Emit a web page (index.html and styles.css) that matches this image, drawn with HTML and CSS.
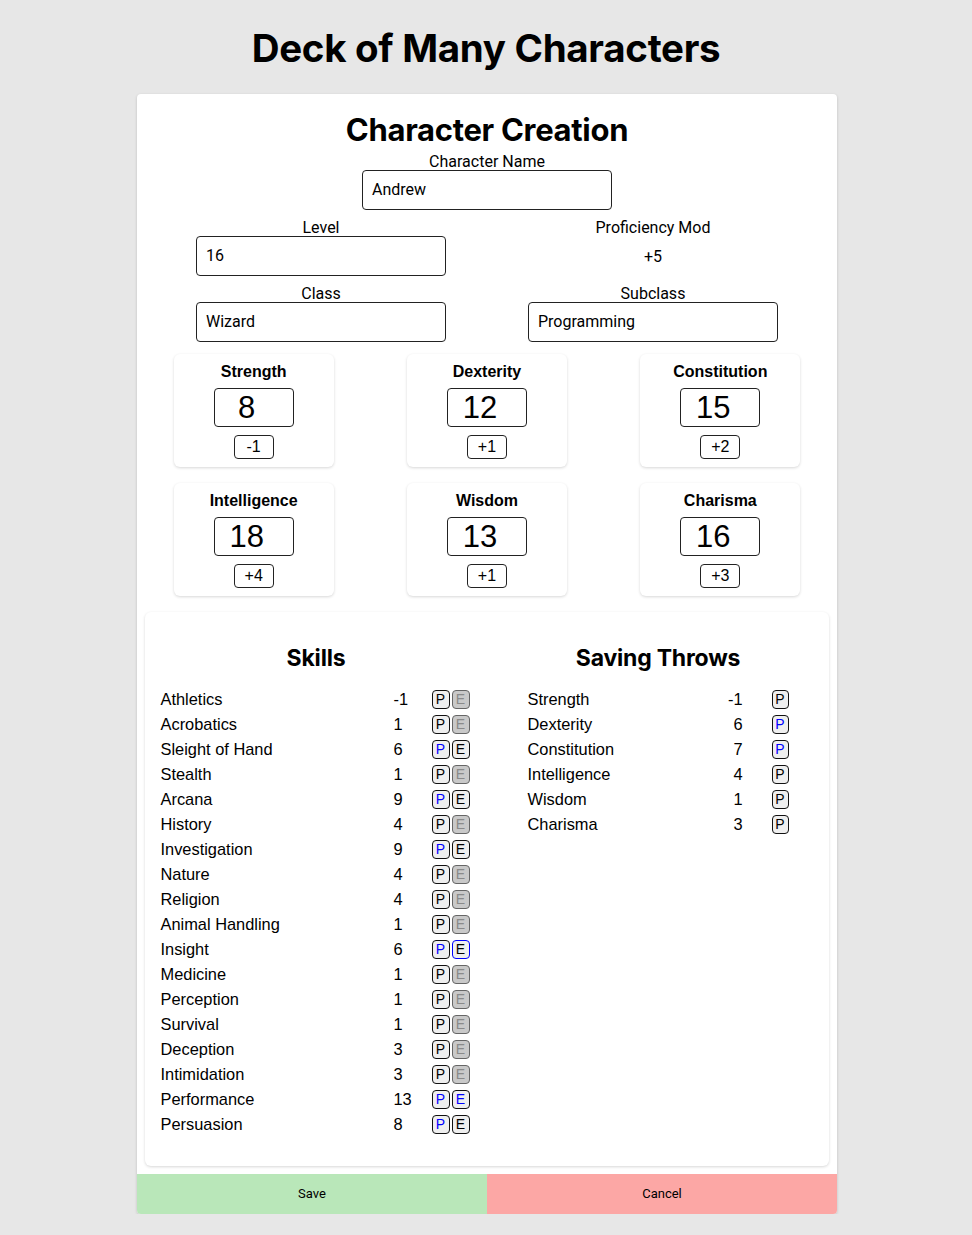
FILE: index.html
```html
<!DOCTYPE html>
<html>
<head>
<meta charset="utf-8">
<link rel="stylesheet" href="styles.css">
</head>
<body>
<h1 class="page-title">Deck of Many Characters</h1>
<div class="card">
  <div class="card-body">
    <h2 class="card-title">Character Creation</h2>
    <div class="field center">
      <label class="lbl">Character Name</label>
      <div class="input">Andrew</div>
    </div>
    <div class="two-col">
      <div class="field">
        <label class="lbl">Level</label>
        <div class="input">16</div>
      </div>
      <div class="field">
        <label class="lbl">Proficiency Mod</label>
        <div class="static">+5</div>
      </div>
      <div class="field">
        <label class="lbl">Class</label>
        <div class="input">Wizard</div>
      </div>
      <div class="field">
        <label class="lbl">Subclass</label>
        <div class="input">Programming</div>
      </div>
    </div>
  </div>

  <div class="abilities">
    <div class="ability"><div class="ab-name">Strength</div><div class="ab-val">8</div><div class="ab-mod">-1</div></div>
    <div class="ability"><div class="ab-name">Dexterity</div><div class="ab-val">12</div><div class="ab-mod">+1</div></div>
    <div class="ability"><div class="ab-name">Constitution</div><div class="ab-val">15</div><div class="ab-mod">+2</div></div>
    <div class="ability"><div class="ab-name">Intelligence</div><div class="ab-val">18</div><div class="ab-mod">+4</div></div>
    <div class="ability"><div class="ab-name">Wisdom</div><div class="ab-val">13</div><div class="ab-mod">+1</div></div>
    <div class="ability"><div class="ab-name">Charisma</div><div class="ab-val">16</div><div class="ab-mod">+3</div></div>
  </div>

  <div class="skills-card">
    <div class="skills-col">
      <h3 class="sec-title">Skills</h3>
      <div class="skill-table">
        <div class="row"><span class="nm">Athletics</span><span class="vl">-1</span><span class="bd"><span class="b">P</span><span class="b dis">E</span></span></div>
        <div class="row"><span class="nm">Acrobatics</span><span class="vl">1</span><span class="bd"><span class="b">P</span><span class="b dis">E</span></span></div>
        <div class="row"><span class="nm">Sleight of Hand</span><span class="vl">6</span><span class="bd"><span class="b on">P</span><span class="b">E</span></span></div>
        <div class="row"><span class="nm">Stealth</span><span class="vl">1</span><span class="bd"><span class="b">P</span><span class="b dis">E</span></span></div>
        <div class="row"><span class="nm">Arcana</span><span class="vl">9</span><span class="bd"><span class="b on">P</span><span class="b">E</span></span></div>
        <div class="row"><span class="nm">History</span><span class="vl">4</span><span class="bd"><span class="b">P</span><span class="b dis">E</span></span></div>
        <div class="row"><span class="nm">Investigation</span><span class="vl">9</span><span class="bd"><span class="b on">P</span><span class="b">E</span></span></div>
        <div class="row"><span class="nm">Nature</span><span class="vl">4</span><span class="bd"><span class="b">P</span><span class="b dis">E</span></span></div>
        <div class="row"><span class="nm">Religion</span><span class="vl">4</span><span class="bd"><span class="b">P</span><span class="b dis">E</span></span></div>
        <div class="row"><span class="nm">Animal Handling</span><span class="vl">1</span><span class="bd"><span class="b">P</span><span class="b dis">E</span></span></div>
        <div class="row"><span class="nm">Insight</span><span class="vl">6</span><span class="bd"><span class="b on">P</span><span class="b focus">E</span></span></div>
        <div class="row"><span class="nm">Medicine</span><span class="vl">1</span><span class="bd"><span class="b">P</span><span class="b dis">E</span></span></div>
        <div class="row"><span class="nm">Perception</span><span class="vl">1</span><span class="bd"><span class="b">P</span><span class="b dis">E</span></span></div>
        <div class="row"><span class="nm">Survival</span><span class="vl">1</span><span class="bd"><span class="b">P</span><span class="b dis">E</span></span></div>
        <div class="row"><span class="nm">Deception</span><span class="vl">3</span><span class="bd"><span class="b">P</span><span class="b dis">E</span></span></div>
        <div class="row"><span class="nm">Intimidation</span><span class="vl">3</span><span class="bd"><span class="b">P</span><span class="b dis">E</span></span></div>
        <div class="row"><span class="nm">Performance</span><span class="vl">13</span><span class="bd"><span class="b on">P</span><span class="b on">E</span></span></div>
        <div class="row"><span class="nm">Persuasion</span><span class="vl">8</span><span class="bd"><span class="b on">P</span><span class="b">E</span></span></div>
      </div>
    </div>
    <div class="skills-col">
      <h3 class="sec-title">Saving Throws</h3>
      <div class="save-table">
        <div class="row"><span class="nm">Strength</span><span class="vl">-1</span><span class="bd"><span class="b">P</span></span></div>
        <div class="row"><span class="nm">Dexterity</span><span class="vl">6</span><span class="bd"><span class="b on">P</span></span></div>
        <div class="row"><span class="nm">Constitution</span><span class="vl">7</span><span class="bd"><span class="b on">P</span></span></div>
        <div class="row"><span class="nm">Intelligence</span><span class="vl">4</span><span class="bd"><span class="b">P</span></span></div>
        <div class="row"><span class="nm">Wisdom</span><span class="vl">1</span><span class="bd"><span class="b">P</span></span></div>
        <div class="row"><span class="nm">Charisma</span><span class="vl">3</span><span class="bd"><span class="b">P</span></span></div>
      </div>
    </div>
  </div>

  <div class="actions">
    <div class="btn save">Save</div>
    <div class="btn cancel">Cancel</div>
  </div>
</div>
</body>
</html>
```

FILE: styles.css
```css
html, body {
  margin: 0;
  padding: 0;
}
body {
  background: #e7e7e7;
  color: #000;
  font-family: Roboto, "Liberation Sans", sans-serif;
}
.page-title {
  font-family: Inter, "Liberation Sans", sans-serif;
  font-weight: 700;
  font-size: 38.5px;
  line-height: 44px;
  text-align: center;
  margin: 0;
  padding: 26px 0 24px;
  letter-spacing: -0.3px;
}
.card {
  width: 700px;
  margin: 0 auto;
  background: #fff;
  border-radius: 4px;
  box-shadow: 0 1px 3px rgba(0,0,0,0.18);
  overflow: hidden;
  position: relative;
  left: 1px;
}
.card-body {
  padding: 16px 18px 0;
}
.card-title {
  font-family: Inter, "Liberation Sans", sans-serif;
  font-weight: 700;
  font-size: 31px;
  line-height: 40px;
  margin: 0;
  text-align: center;
  letter-spacing: -0.3px;
}
.field {
  display: flex;
  flex-direction: column;
  align-items: center;
}
.field.center {
  margin-top: 2px;
}
.lbl {
  font-size: 16px;
  line-height: 20px;
  height: 18px;
}
.input {
  box-sizing: border-box;
  width: 250px;
  height: 40px;
  border: 1px solid #222;
  border-radius: 4px;
  padding: 0 9px;
  font-size: 16px;
  line-height: 38px;
}
.static {
  height: 40px;
  line-height: 42px;
  font-size: 16px;
}
.two-col {
  display: grid;
  grid-template-columns: 1fr 1fr;
  row-gap: 8px;
  margin-top: 8px;
}
.abilities {
  display: grid;
  grid-template-columns: repeat(3, 1fr);
  row-gap: 16px;
  margin-top: 12px;
  justify-items: center;
}
.ability {
  box-sizing: border-box;
  width: 160px;
  height: 113px;
  padding: 8px 0;
  border-radius: 6px;
  box-shadow: 0 1px 3px rgba(0,0,0,0.16);
  display: flex;
  flex-direction: column;
  align-items: center;
  font-family: "Liberation Sans", Arial, sans-serif;
}
.ab-name {
  font-weight: 700;
  font-size: 16px;
  line-height: 20px;
  height: 18px;
}
.ab-val {
  box-sizing: border-box;
  width: 80px;
  height: 39px;
  margin-top: 8px;
  border: 1px solid #222;
  border-radius: 4px;
  font-size: 31px;
  line-height: 37px;
  text-align: center;
  padding-right: 14px;
}
.ab-mod {
  box-sizing: border-box;
  width: 40px;
  height: 24px;
  margin-top: 8px;
  border: 1px solid #222;
  border-radius: 4px;
  font-size: 16px;
  line-height: 22px;
  text-align: center;
}
.skills-card {
  margin: 16px 8px 0;
  border-radius: 6px;
  box-shadow: 0 1px 3px rgba(0,0,0,0.16);
  display: grid;
  grid-template-columns: 1fr 1fr;
  padding: 32px 0 29px;
  font-family: "Liberation Sans", Arial, sans-serif;
}
.skills-col {
  display: flex;
  flex-direction: column;
  align-items: center;
}
.sec-title {
  font-family: Inter, "Liberation Sans", sans-serif;
  font-weight: 700;
  font-size: 23px;
  line-height: 29px;
  margin: 0 0 14px;
  letter-spacing: -0.2px;
}
.row {
  display: flex;
  align-items: center;
  height: 25px;
  font-size: 16.4px;
}
.skill-table .row .nm { width: 233px; }
.skill-table .row .vl { width: 38px; }
.skill-table .row .bd { width: 38px; }
.skill-table { margin-left: -2px; }
.save-table .row .nm { width: 180px; }
.save-table .row .vl { width: 35px; text-align: right; }
.save-table .row .bd { width: 46px; padding-left: 29px; box-sizing: border-box; }
.bd {
  display: flex;
  gap: 2px;
}
.b {
  box-sizing: border-box;
  width: 18px;
  height: 19px;
  border: 1px solid #111;
  border-radius: 4px;
  background: #efefef;
  color: #000;
  font-size: 14px;
  line-height: 17px;
  text-align: center;
}
.b.on { color: #0000ff; }
.b.focus { border-color: #0000ff; }
.b.dis {
  background: #c9c9c9;
  color: #8a8a8a;
  border-color: #666;
}
.actions {
  display: grid;
  grid-template-columns: 1fr 1fr;
  margin-top: 8px;
}
.btn {
  height: 40px;
  line-height: 40px;
  text-align: center;
  font-size: 13px;
}
.save { background: #b9e7b9; }
.cancel { background: #fca7a5; }
```
